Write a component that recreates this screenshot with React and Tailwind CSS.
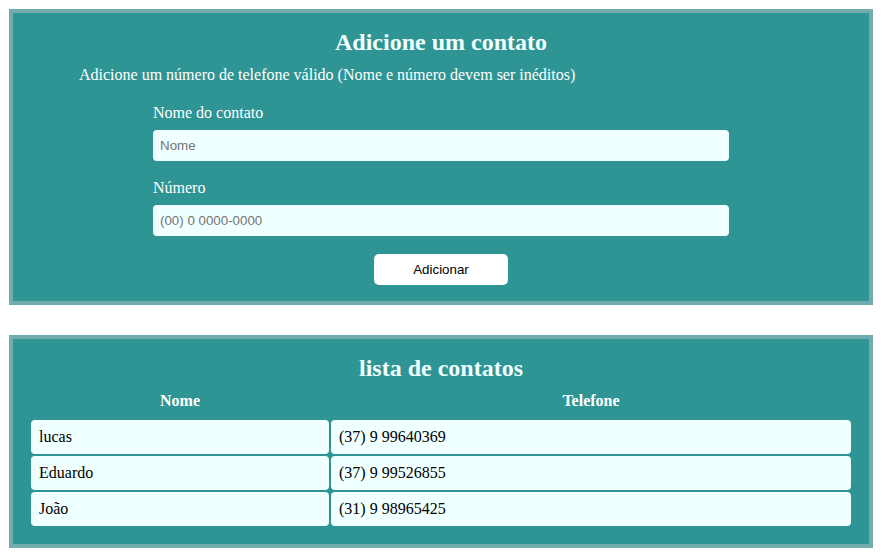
import React from "react";

const contacts = [
  { nome: "lucas", tel: "(37) 9 99640369" },
  { nome: "Eduardo", tel: "(37) 9 99526855" },
  { nome: "João", tel: "(31) 9 98965425" },
];

export default function App() {
  return (
    <div className="w-[888px] h-[552px] bg-white pt-[9px] pl-[9px] text-white" style={{ fontFamily: '"Liberation Serif", "Times New Roman", serif' }}>
      <div className="w-[864px] border-4 border-[#73acac] bg-[#2e9494] pt-[15px] pb-[16px] flex flex-col">
        <h2 className="text-[24px] font-bold leading-[28px] h-[28px] text-center text-[#f0ffff]">Adicione um contato</h2>
        <p className="mt-[10px] text-[16px] leading-[18px] pl-[66px]">Adicione um número de telefone válido (Nome e número devem ser inéditos)</p>
        <div className="flex flex-col pl-[140px]">
          <label className="mt-[20px] text-[16px] leading-[18px]">Nome do contato</label>
          <input
            className="mt-[8px] w-[576px] h-[31px] rounded-[4px] bg-[#f0ffff] px-[7px] text-[13.33px] text-black placeholder:text-[#757575] outline-none"
            style={{ fontFamily: '"Liberation Sans", Arial, sans-serif' }}
            placeholder="Nome"
          />
          <label className="mt-[18px] text-[16px] leading-[18px]">Número</label>
          <input
            className="mt-[8px] w-[576px] h-[31px] rounded-[4px] bg-[#f0ffff] px-[7px] text-[13.33px] text-black placeholder:text-[#757575] outline-none"
            style={{ fontFamily: '"Liberation Sans", Arial, sans-serif' }}
            placeholder="(00) 0 0000-0000"
          />
        </div>
        <div className="flex justify-center mt-[18px]">
          <button
            className="w-[134px] h-[31px] rounded-[5px] bg-white text-black text-[13.33px]"
            style={{ fontFamily: '"Liberation Sans", Arial, sans-serif' }}
          >
            Adicionar
          </button>
        </div>
      </div>

      <div className="mt-[30px] w-[864px] border-4 border-[#73acac] bg-[#2e9494] pt-[15px] pb-[18px] px-[18px] flex flex-col">
        <h2 className="text-[24px] font-bold leading-[28px] h-[28px] text-center text-[#f0ffff]">lista de contatos</h2>
        <div className="mt-[10px] grid grid-cols-[298px_520px] gap-[2px]">
          <div className="h-[26px] text-center font-bold text-[16px] leading-[18px]">Nome</div>
          <div className="h-[26px] text-center font-bold text-[16px] leading-[18px]">Telefone</div>
          {contacts.map((c) => (
            <React.Fragment key={c.nome}>
              <div className="h-[34px] rounded-[4px] bg-[#f0ffff] text-black text-[16px] flex items-center px-[8px]">{c.nome}</div>
              <div className="h-[34px] rounded-[4px] bg-[#f0ffff] text-black text-[16px] flex items-center px-[8px]">{c.tel}</div>
            </React.Fragment>
          ))}
        </div>
      </div>
    </div>
  );
}
